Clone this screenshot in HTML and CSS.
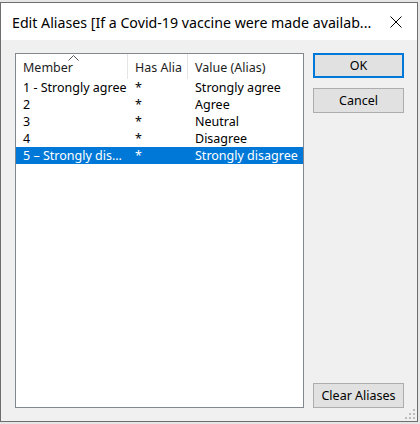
FILE: index.html
```html
<!DOCTYPE html>
<html>
<head>
<meta charset="utf-8">
<link rel="stylesheet" href="styles.css">
</head>
<body>
<div class="window">
  <div class="titlebar">
    <span class="title">Edit Aliases [If a Covid-19 vaccine were made availab...</span>
    <svg class="close" width="12" height="12" viewBox="0 0 12 12"><path d="M0.5 0.5 L11.5 11.5 M11.5 0.5 L0.5 11.5" stroke="#000" stroke-width="1" fill="none"/></svg>
  </div>
  <div class="client">
    <div class="listbox">
      <div class="header">
        <div class="hcell c1">Member<svg class="sort" width="11" height="6" viewBox="0 0 11 6"><path d="M0.5 5.5 L5.5 0.5 L10.5 5.5" stroke="#555" stroke-width="1" fill="none"/></svg></div>
        <div class="hcell c2">Has Alia</div>
        <div class="hcell c3">Value (Alias)</div>
      </div>
      <div class="row"><span class="c1">1 - Strongly agree</span><span class="c2">*</span><span class="c3">Strongly agree</span></div>
      <div class="row"><span class="c1">2</span><span class="c2">*</span><span class="c3">Agree</span></div>
      <div class="row"><span class="c1">3</span><span class="c2">*</span><span class="c3">Neutral</span></div>
      <div class="row"><span class="c1">4</span><span class="c2">*</span><span class="c3">Disagree</span></div>
      <div class="row selected"><span class="c1">5 – Strongly dis...</span><span class="c2">*</span><span class="c3">Strongly disagree</span></div>
    </div>
    <div class="buttons">
      <button class="btn default">OK</button>
      <button class="btn">Cancel</button>
      <button class="btn clear">Clear Aliases</button>
    </div>
    <svg class="grip" width="10" height="10" viewBox="0 0 10 10">
      <rect x="8" y="0" width="2" height="2" fill="#bcbcbc"/>
      <rect x="4" y="4" width="2" height="2" fill="#bcbcbc"/>
      <rect x="8" y="4" width="2" height="2" fill="#bcbcbc"/>
      <rect x="0" y="8" width="2" height="2" fill="#bcbcbc"/>
      <rect x="4" y="8" width="2" height="2" fill="#bcbcbc"/>
      <rect x="8" y="8" width="2" height="2" fill="#bcbcbc"/>
    </svg>
  </div>
</div>
</body>
</html>
```

FILE: styles.css
```css
html, body {
  margin: 0;
  padding: 0;
}
body {
  background: #e6e6e6;
  width: 420px;
  height: 424px;
  overflow: hidden;
  font-family: "Noto Sans", "Liberation Sans", sans-serif;
}
.window {
  margin-top: 2px;
  width: 416px;
  height: 418px;
  border: 1px solid #6e6e6e;
  background: #f0f0f0;
  display: flex;
  flex-direction: column;
}
.titlebar {
  height: 37px;
  background: #fff;
  display: flex;
  align-items: center;
  padding-left: 11px;
  padding-right: 15px;
}
.title {
  flex: none;
  font-size: 14.2px;
  color: #000;
  white-space: nowrap;
  padding-top: 1px;
}
.close {
  display: block;
  margin-left: auto;
  margin-top: 1px;
}
.client {
  flex: 1;
  display: flex;
  padding: 13px 13px 13px 14px;
  position: relative;
  gap: 9px;
}
.listbox {
  width: 287px;
  border: 1px solid #828790;
  background: #fff;
  font-size: 12.5px;
}
.header {
  height: 25px;
  display: grid;
  grid-template-columns: 112px 60px 1fr;
}
.hcell {
  position: relative;
  padding-left: 7px;
  line-height: 27px;
  color: #1e1e1e;
  white-space: nowrap;
  overflow: hidden;
  border-right: 1px solid #e5e5e5;
}
.hcell.c3 {
  border-right: none;
}
.sort {
  position: absolute;
  left: 52px;
  top: 1px;
}
.row {
  height: 17px;
  line-height: 18px;
  display: grid;
  grid-template-columns: 112px 60px 1fr;
  color: #000;
  white-space: nowrap;
}
.row span {
  padding-left: 7px;
  overflow: hidden;
}
.row.selected {
  background: #0078d7;
  color: #fff;
}
.buttons {
  width: 91px;
  display: flex;
  flex-direction: column;
  gap: 10px;
}
.btn {
  height: 25px;
  width: 91px;
  background: #e1e1e1;
  border: 1px solid #adadad;
  font-family: "Noto Sans", "Liberation Sans", sans-serif;
  font-size: 12.5px;
  color: #000;
  padding: 0;
}
.btn.default {
  border: 2px solid #0078d7;
}
.btn.clear {
  margin-top: auto;
}
.grip {
  position: absolute;
  right: 2px;
  bottom: 2px;
}
```
